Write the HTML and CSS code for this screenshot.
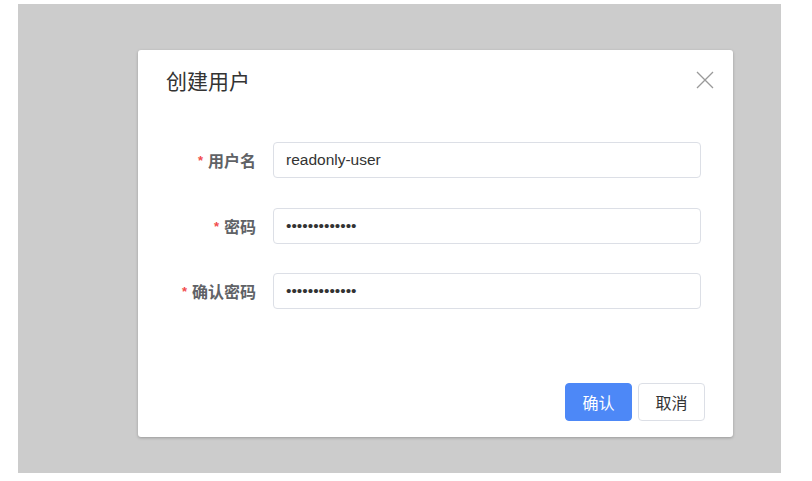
FILE: index.html
```html
<!DOCTYPE html>
<html lang="zh-CN">
<head>
<meta charset="utf-8">
<title>创建用户</title>
<link rel="stylesheet" href="styles.css">
</head>
<body>
<div class="backdrop">
  <div class="dialog">
    <div class="dialog-header">
      <span class="dialog-title">创建用户</span>
      <span class="dialog-close" aria-label="关闭">
        <svg width="18" height="18" viewBox="0 0 18 18"><path d="M1 1 L17 17 M17 1 L1 17" stroke="#9a9a9a" stroke-width="1.3" fill="none"/></svg>
      </span>
    </div>
    <div class="dialog-body">
      <div class="form-row">
        <label class="form-label"><span class="req">*</span>用户名</label>
        <div class="form-control"><input class="input" type="text" value="readonly-user" readonly></div>
      </div>
      <div class="form-row">
        <label class="form-label"><span class="req">*</span>密码</label>
        <div class="form-control"><input class="input" type="password" value="xxxxxxxxxxxxx" readonly></div>
      </div>
      <div class="form-row">
        <label class="form-label"><span class="req">*</span>确认密码</label>
        <div class="form-control"><input class="input" type="password" value="xxxxxxxxxxxxx" readonly></div>
      </div>
    </div>
    <div class="dialog-footer">
      <button class="btn btn-primary">确认</button>
      <button class="btn btn-default">取消</button>
    </div>
  </div>
</div>
</body>
</html>
```
FILE: styles.css
```css
html, body {
  margin: 0;
  padding: 0;
  background: #ffffff;
  font-family: "Liberation Sans", "Noto Sans CJK SC", sans-serif;
}
.backdrop {
  margin: 4px 0 0 18px;
  width: 763px;
  height: 469px;
  box-sizing: border-box;
  background: #cccccc;
  padding: 46px 48px 36px 120px;
}
.dialog {
  width: 595px;
  height: 387px;
  background: #ffffff;
  border-radius: 3px;
  box-shadow: 0 1px 3px rgba(0, 0, 0, 0.25);
  display: flex;
  flex-direction: column;
}
.dialog-header {
  display: flex;
  align-items: center;
  justify-content: space-between;
  padding: 20px 19px 20px 28px;
}
.dialog-title {
  font-size: 21px;
  line-height: 24px;
  color: #333333;
}
.dialog-close {
  display: flex;
  width: 18px;
  height: 18px;
  margin-top: -4px;
}
.dialog-body {
  padding: 28px 32px 0 0;
}
.form-row {
  display: grid;
  grid-template-columns: 118px 1fr;
  column-gap: 17px;
  align-items: center;
  margin-bottom: 29.5px;
}
.form-label {
  text-align: right;
  font-size: 16px;
  font-weight: bold;
  color: #606266;
}
.req {
  color: #f24c4c;
  font-size: 13px;
  margin-right: 5px;
  vertical-align: 2px;
}
.input {
  display: block;
  width: 100%;
  height: 36px;
  box-sizing: border-box;
  border: 1px solid #dcdfe6;
  border-radius: 4px;
  padding: 0 12px;
  font-family: "Liberation Sans", "Noto Sans CJK SC", sans-serif;
  font-size: 15.5px;
  color: #333333;
  background: #ffffff;
  outline: none;
}
.dialog-footer {
  margin-top: auto;
  display: flex;
  justify-content: flex-end;
  gap: 6px;
  padding: 0 28px 16px 0;
}
.btn {
  width: 67px;
  height: 38px;
  border-radius: 4px;
  font-family: "Liberation Sans", "Noto Sans CJK SC", sans-serif;
  font-size: 16px;
  padding: 0;
  cursor: pointer;
}
.btn-primary {
  background: #4d88f7;
  border: 1px solid #4d88f7;
  color: #ffffff;
}
.btn-default {
  background: #ffffff;
  border: 1px solid #dcdfe6;
  color: #333333;
}
```
